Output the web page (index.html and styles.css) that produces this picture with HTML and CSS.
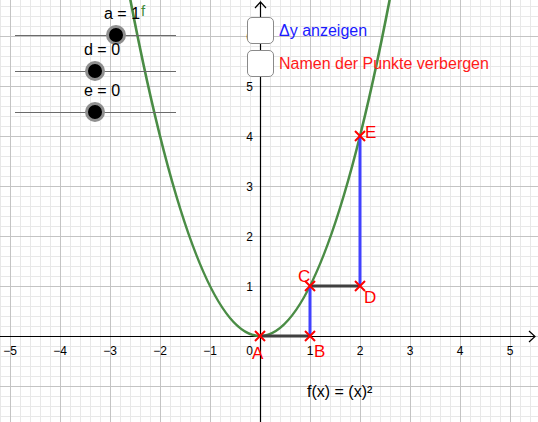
FILE: index.html
```html
<!DOCTYPE html>
<html>
<head>
<meta charset="utf-8">
<link rel="stylesheet" href="styles.css">
</head>
<body>
<div class="stage">
  <svg class="plot" width="538" height="422" viewBox="0 0 538 422" xmlns="http://www.w3.org/2000/svg">
    <defs>
      <pattern id="minor" x="0" y="6" width="10" height="10" patternUnits="userSpaceOnUse">
        <path d="M0.5 0 V10 M0 0.5 H10" stroke="#e8e8e8" stroke-width="1" fill="none"/>
      </pattern>
      <pattern id="major" x="10" y="36" width="50" height="50" patternUnits="userSpaceOnUse">
        <path d="M0.5 0 V50 M0 0.5 H50" stroke="#c4c4c4" stroke-width="1" fill="none"/>
      </pattern>
    </defs>
    <rect width="538" height="422" fill="#fff"/>
    <rect width="538" height="422" fill="url(#minor)"/>
    <rect width="538" height="422" fill="url(#major)"/>

    <!-- axes -->
    <path d="M0 336.5 H535 M529 331 L535 336.5 L529 342" stroke="#000" stroke-width="1.2" fill="none"/>
    <path d="M260.5 422 V2 M255 8 L260.5 2 L266 8" stroke="#000" stroke-width="1.2" fill="none"/>

    <g class="tick">
      <text x="10" y="355" text-anchor="middle">−5</text>
      <text x="60" y="355" text-anchor="middle">−4</text>
      <text x="110" y="355" text-anchor="middle">−3</text>
      <text x="160" y="355" text-anchor="middle">−2</text>
      <text x="210" y="355" text-anchor="middle">−1</text>
      <text x="253" y="355" text-anchor="end">0</text>
      <text x="310" y="355" text-anchor="middle">1</text>
      <text x="360" y="355" text-anchor="middle">2</text>
      <text x="410" y="355" text-anchor="middle">3</text>
      <text x="460" y="355" text-anchor="middle">4</text>
      <text x="510" y="355" text-anchor="middle">5</text>
      <text x="253" y="291" text-anchor="end">1</text>
      <text x="253" y="241" text-anchor="end">2</text>
      <text x="253" y="191" text-anchor="end">3</text>
      <text x="253" y="141" text-anchor="end">4</text>
      <text x="253" y="91" text-anchor="end">5</text>
      <text x="253" y="41" text-anchor="end">6</text>
    </g>

    <!-- parabola -->
    <path d="M130 -2 Q260 674 390 -2" stroke="#4a8c45" stroke-width="2.6" fill="none"/>
    <text class="flabel" x="141" y="16">f</text>

    <!-- segments -->
    <path d="M260 336 H310 M310 286 H360" stroke="#404040" stroke-width="3" fill="none"/>
    <path d="M310 336 V286 M360 286 V136" stroke="#4141ff" stroke-width="3" fill="none"/>

    <!-- points -->
    <g stroke="#ff0000" stroke-width="2" fill="none">
      <path d="M255 331 L265 341 M265 331 L255 341"/>
      <path d="M305 331 L315 341 M315 331 L305 341"/>
      <path d="M305 281 L315 291 M315 281 L305 291"/>
      <path d="M355 281 L365 291 M365 281 L355 291"/>
      <path d="M355 131 L365 141 M365 131 L355 141"/>
    </g>
    <g class="plabel">
      <text x="252" y="359">A</text>
      <text x="314" y="357">B</text>
      <text x="298" y="282">C</text>
      <text x="364" y="303">D</text>
      <text x="365" y="138">E</text>
    </g>

    <text class="formula" x="307" y="397">f(x) = (x)²</text>
  </svg>

  <div class="slider s-a">
    <span class="slabel">a = 1</span>
    <div class="track"><span class="knob"></span></div>
  </div>
  <div class="slider s-d">
    <span class="slabel">d = 0</span>
    <div class="track"><span class="knob"></span></div>
  </div>
  <div class="slider s-e">
    <span class="slabel">e = 0</span>
    <div class="track"><span class="knob"></span></div>
  </div>

  <div class="checks">
    <label class="check blue"><span class="box"></span><span>Δy anzeigen</span></label>
    <label class="check red"><span class="box"></span><span>Namen der Punkte verbergen</span></label>
  </div>
</div>
</body>
</html>
```
FILE: styles.css
```css
html, body {
  margin: 0;
  padding: 0;
  background: #fff;
}
.stage {
  position: relative;
  width: 538px;
  height: 422px;
  overflow: hidden;
  font-family: "Liberation Sans", Arial, sans-serif;
}
.plot {
  display: block;
}
.tick text {
  font-family: "Liberation Sans", Arial, sans-serif;
  font-size: 12px;
  fill: #000;
}
.flabel {
  font-family: "Liberation Sans", Arial, sans-serif;
  font-size: 15px;
  fill: #3f8a3a;
}
.plabel text {
  font-family: "Liberation Sans", Arial, sans-serif;
  font-size: 17px;
  fill: #ff0000;
}
.formula {
  font-family: "Liberation Sans", Arial, sans-serif;
  font-size: 16px;
  fill: #000;
}
.slider {
  position: absolute;
  left: 15px;
  width: 161px;
}
.s-a { top: 5px; }
.s-d { top: 41px; }
.s-e { top: 82px; }
.slabel {
  position: absolute;
  top: 0;
  font-size: 16px;
  color: #000;
  white-space: nowrap;
}
.s-a .slabel { left: 89px; }
.s-d .slabel { left: 69px; }
.s-e .slabel { left: 69px; }
.track {
  position: absolute;
  left: 0;
  top: 30px;
  width: 161px;
  height: 1px;
  background: #6b6b6b;
}
.knob {
  position: absolute;
  top: -9px;
  width: 14px;
  height: 14px;
  border-radius: 50%;
  background: #000;
  border: 3px solid #8f8f8f;
  box-sizing: content-box;
  margin-left: -10px;
  margin-top: -1px;
}
.s-a .knob { left: 101px; }
.s-d .knob { left: 80px; }
.s-e .knob { left: 80px; }
.checks {
  position: absolute;
  left: 247px;
  top: 17px;
  display: flex;
  flex-direction: column;
  gap: 6px;
}
.check {
  display: flex;
  align-items: center;
  gap: 5px;
  font-size: 16px;
  white-space: nowrap;
}
.box {
  width: 25px;
  height: 25px;
  border: 1.5px solid #8a8a8a;
  border-radius: 5px;
  background: #fff;
}
.blue { color: #1a1aff; }
.red { color: #ff1a1a; }
```
